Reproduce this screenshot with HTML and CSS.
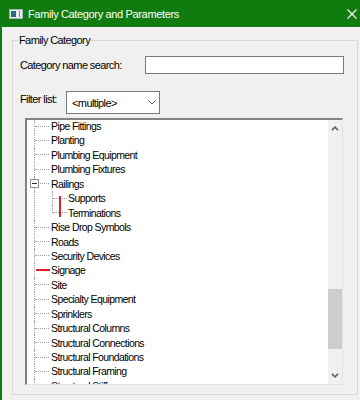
FILE: index.html
```html
<!DOCTYPE html>
<html lang="en">
<head>
  <meta charset="UTF-8" />
  <title>Family Category and Parameters</title>
  <link rel="stylesheet" href="styles.css">
</head>
<body>
  <div class="titlebar">
    <svg class="app-icon" width="14" height="10" viewBox="0 0 14 10">
      <rect x="0.5" y="0.5" width="13" height="9" fill="#e9edf0" stroke="#a9b3ba" />
      <rect x="2" y="2" width="5" height="6" fill="#2f6b88" />
      <rect x="10" y="2" width="1" height="6" fill="#6f8796" />
    </svg>
    <span class="title">Family Category and Parameters</span>
    <svg class="close" width="10" height="10" viewBox="0 0 10 10">
      <path d="M0.5 0.5 L9.5 9.5 M9.5 0.5 L0.5 9.5" stroke="#fff" stroke-width="1.1" fill="none" />
    </svg>
  </div>

  <div class="client">
    <fieldset class="group">
      <legend>Family Category</legend>

      <div class="search-row">
        <label for="catSearch">Category name search:</label>
        <input id="catSearch" class="search" type="text" />
      </div>

      <div class="filter-row">
        <label>Filter list:</label>
        <div class="combo">
          <span>&lt;multiple&gt;</span>
          <svg width="8" height="5" viewBox="0 0 8 5">
            <polyline points="0.5,0.5 4,4 7.5,0.5" fill="none" stroke="#5f5f5f" stroke-width="1" />
          </svg>
        </div>
      </div>

      <div class="listbox">
        <div class="tree">
          <div class="row"><span class="stem"></span>Pipe Fittings</div>
          <div class="row"><span class="stem"></span>Planting</div>
          <div class="row"><span class="stem"></span>Plumbing Equipment</div>
          <div class="row"><span class="stem"></span>Plumbing Fixtures</div>
          <div class="row">
            <span class="stem">
              <svg class="toggle" width="9" height="9" viewBox="0 0 9 9">
                <rect x="0.5" y="0.5" width="8" height="8" fill="#fff" stroke="#919191" />
                <path d="M2 4.5 H7" stroke="#333" stroke-width="1" />
              </svg>
            </span>Railings
          </div>
          <div class="row"><span class="stem pass"></span><span class="stem child"></span>Supports</div>
          <div class="row"><span class="stem pass"></span><span class="stem child last"></span>Terminations</div>
          <div class="row"><span class="stem"></span>Rise Drop Symbols</div>
          <div class="row"><span class="stem"></span>Roads</div>
          <div class="row"><span class="stem"></span>Security Devices</div>
          <div class="row"><span class="stem mark"></span>Signage</div>
          <div class="row"><span class="stem"></span>Site</div>
          <div class="row"><span class="stem"></span>Specialty Equipment</div>
          <div class="row"><span class="stem"></span>Sprinklers</div>
          <div class="row"><span class="stem"></span>Structural Columns</div>
          <div class="row"><span class="stem"></span>Structural Connections</div>
          <div class="row"><span class="stem"></span>Structural Foundations</div>
          <div class="row"><span class="stem"></span>Structural Framing</div>
          <div class="row"><span class="stem"></span>Structural Stiffeners</div>
          <span class="annot"></span>
        </div>
        <div class="scrollbar">
          <div class="sb-btn">
            <svg width="8" height="5" viewBox="0 0 8 5">
              <polyline points="0.8,4.3 4,1.2 7.2,4.3" fill="none" stroke="#606060" stroke-width="1.6" />
            </svg>
          </div>
          <div class="sb-track"><div class="sb-thumb"></div></div>
          <div class="sb-btn">
            <svg width="8" height="5" viewBox="0 0 8 5">
              <polyline points="0.8,0.7 4,3.8 7.2,0.7" fill="none" stroke="#606060" stroke-width="1.6" />
            </svg>
          </div>
        </div>
      </div>
    </fieldset>
  </div>
</body>
</html>
```

FILE: styles.css
```css
body {
  margin: 0;
  background: #f0f0f0;
  font-family: "Liberation Sans", Arial, sans-serif;
  font-size: 11px;
  letter-spacing: -0.6px;
  color: #000;
}
.titlebar {
  height: 27px;
  background: #107c10;
  color: #fff;
  display: flex;
  align-items: center;
  padding: 0 3px 0 9px;
}
.app-icon {
  margin-right: 5px;
}
.title {
  letter-spacing: -0.35px;
}
.close {
  margin-left: auto;
}
.client {
  height: 373px;
  box-sizing: border-box;
  border-left: 2px solid #107c10;
  padding-top: 7px;
}
.group {
  margin: 0 2px 0 10px;
  padding: 0 0 9px 0;
  border: 1px solid #d9d9d9;
}
.group legend {
  margin-left: 5px;
  padding: 0 1px;
  line-height: 13px;
}
.search-row {
  display: flex;
  align-items: center;
  justify-content: space-between;
  margin: 9px 13px 0 7px;
}
.search {
  width: 199px;
  height: 18px;
  box-sizing: border-box;
  margin: 0;
  padding: 0 3px;
  border: 1px solid #7a7a7a;
  background: #fff;
}
.filter-row {
  display: flex;
  align-items: flex-start;
  margin: 17px 0 0 7px;
}
.filter-row label {
  width: 46px;
  padding-top: 2px;
  line-height: 13px;
}
.combo {
  width: 94px;
  height: 23px;
  box-sizing: border-box;
  border: 1px solid #7a7a7a;
  background: #fff;
  display: flex;
  align-items: center;
  justify-content: space-between;
  padding: 0 3px 0 5px;
}
.listbox {
  display: flex;
  height: 267px;
  box-sizing: border-box;
  margin: 4px 14px 0 12px;
  border-style: solid;
  border-width: 2px 1px 1px 2px;
  border-color: #828282 #e3e3e3 #e3e3e3 #828282;
  background: #fff;
}
.tree {
  flex: 1;
  overflow: hidden;
  position: relative;
  font-size: 10.5px;
}
.row {
  display: flex;
  align-items: center;
  height: 14.45px;
  line-height: 14px;
  padding-left: 7px;
  white-space: nowrap;
}
.row:first-child {
  margin-top: -1.2px;
}
.stem {
  flex: none;
  align-self: stretch;
  width: 17px;
  box-sizing: border-box;
  border-left: 1px dotted #a0a0a0;
  display: flex;
  align-items: center;
  position: relative;
}
.stem::after {
  content: "";
  flex: none;
  width: 14px;
  border-top: 1px dotted #a0a0a0;
}
.stem.pass {
  width: 18px;
}
.stem.pass::after {
  display: none;
}
.stem.child {
  width: 16px;
}
.stem.last {
  border-left: none;
}
.stem.last::before {
  content: "";
  align-self: flex-start;
  height: 50%;
  border-left: 1px dotted #a0a0a0;
}
.stem.mark::after {
  border-top: 2px solid #e3182d;
  margin-left: 1px;
}
.toggle {
  position: absolute;
  left: -5px;
  top: 50%;
  margin-top: -4.5px;
}
.annot {
  position: absolute;
  left: 32px;
  top: 76px;
  width: 2px;
  height: 21px;
  background: #e3182d;
}
.scrollbar {
  flex: none;
  width: 14px;
  display: flex;
  flex-direction: column;
  background: #f0f0f0;
}
.sb-btn {
  height: 17px;
  display: flex;
  align-items: center;
  justify-content: center;
}
.sb-track {
  flex: 1;
}
.sb-thumb {
  margin-top: 152px;
  height: 60px;
  background: #cdcdcd;
}
```
